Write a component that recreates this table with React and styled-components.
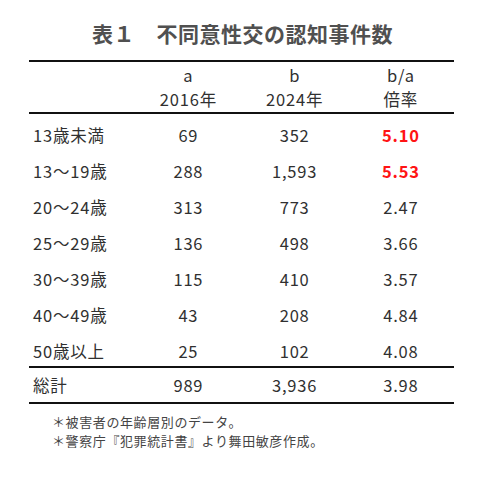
import styled, { createGlobalStyle } from 'styled-components';

const GlobalStyle = createGlobalStyle`
  body {
    margin: 0;
    background: #fff;
    font-family: 'Noto Sans CJK JP', 'Noto Sans', sans-serif;
  }
`;

const Page = styled.div`
  width: 485px;
  height: 500px;
  padding-top: 18px;
  box-sizing: border-box;
`;

const Title = styled.h1`
  margin: 0 0 12px;
  text-align: center;
  font-size: 21px;
  line-height: 30px;
  font-weight: 700;
  color: #505050;
  letter-spacing: 0.5px;
`;

const Table = styled.div`
  margin-left: 29px;
  width: 425px;
  border-top: 2px solid #111;
  border-bottom: 2px solid #111;
  color: #303030;
  font-size: 16.5px;
  letter-spacing: 0.8px;
`;

const Row = styled.div`
  display: grid;
  grid-template-columns: repeat(4, 1fr);
  align-items: center;
  height: ${(p) => p.$h || 36}px;
  padding-top: ${(p) => p.$pt || 0}px;
  box-sizing: border-box;
  border-bottom: ${(p) => (p.$rule ? '2px solid #111' : 'none')};
`;

const Label = styled.div`
  padding-left: 4px;
  white-space: nowrap;
`;

const Cell = styled.div`
  text-align: center;
  line-height: 24px;
  color: ${(p) => (p.$hot ? '#ff1414' : 'inherit')};
  font-weight: ${(p) => (p.$hot ? 700 : 400)};
`;

const Notes = styled.div`
  margin: 8px 0 0 52px;
  font-size: 13px;
  line-height: 19px;
  color: #444;
  letter-spacing: 0.6px;
`;

const rows = [
  ['13歳未満', '69', '352', '5.10', true],
  ['13〜19歳', '288', '1,593', '5.53', true],
  ['20〜24歳', '313', '773', '2.47'],
  ['25〜29歳', '136', '498', '3.66'],
  ['30〜39歳', '115', '410', '3.57'],
  ['40〜49歳', '43', '208', '4.84'],
  ['50歳以上', '25', '102', '4.08'],
];

export default function App() {
  return (
    <Page>
      <GlobalStyle />
      <Title>表１　不同意性交の認知事件数</Title>
      <Table>
        <Row $h={52} $rule>
          <Label />
          <Cell>a<br />2016年</Cell>
          <Cell>b<br />2024年</Cell>
          <Cell>b/a<br />倍率</Cell>
        </Row>
        {rows.map(([label, a, b, r, hot], i) => (
          <Row key={label} $pt={6} $h={i === rows.length - 1 ? 38 : 36} $rule={i === rows.length - 1}>
            <Label>{label}</Label>
            <Cell>{a}</Cell>
            <Cell>{b}</Cell>
            <Cell $hot={hot}>{r}</Cell>
          </Row>
        ))}
        <Row $h={34}>
          <Label>総計</Label>
          <Cell>989</Cell>
          <Cell>3,936</Cell>
          <Cell>3.98</Cell>
        </Row>
      </Table>
      <Notes>
        <div>＊被害者の年齢層別のデータ。</div>
        <div>＊警察庁『犯罪統計書』より舞田敏彦作成。</div>
      </Notes>
    </Page>
  );
}
